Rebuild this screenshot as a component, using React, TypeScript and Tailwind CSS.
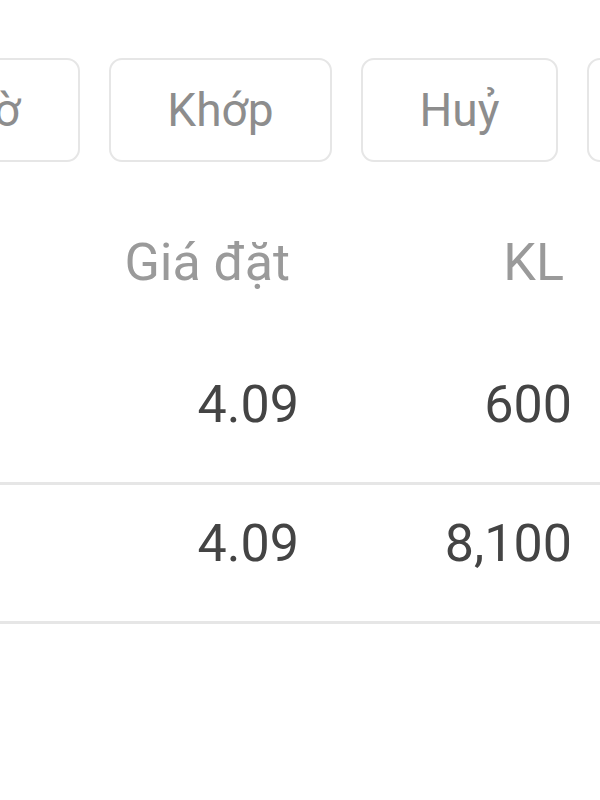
const tabs = [
  { label: "Chờ", w: "w-[201px]" },
  { label: "Khớp", w: "w-[223px]" },
  { label: "Huỷ", w: "w-[197px]" },
  { label: "Tất cả", w: "w-[230px]" },
];

const rows = [
  { price: "4.09", qty: "600" },
  { price: "4.09", qty: "8,100" },
];

export default function App() {
  return (
    <div className="w-[600px] h-[800px] bg-white overflow-hidden font-['Roboto',sans-serif]">
      {/* Status filter tabs */}
      <div className="flex gap-[29px] pt-[58px] ml-[-121px]">
        {tabs.map((t) => (
          <div
            key={t.label}
            className={`${t.w} h-[104px] shrink-0 flex items-center justify-center rounded-[13px] border-2 border-[#e6e6e6] text-[46px] text-[#8d8d8d] whitespace-nowrap`}
          >
            {t.label}
          </div>
        ))}
      </div>

      {/* Table header */}
      <div className="flex h-[184px] pt-[71px] pr-[28px] text-[52px] leading-[60px] text-[#9a9a9a]">
        <div className="flex-1" />
        <div className="w-[200px] text-right pr-[9px]">Giá đặt</div>
        <div className="w-[273px] text-right pr-[8px]">KL</div>
      </div>

      {/* Rows */}
      {rows.map((r, i) => (
        <div
          key={i}
          className="flex h-[139px] pt-[29px] pr-[28px] border-b-[3px] border-[#e6e6e6] text-[52px] leading-[60px] text-[#444444]"
        >
          <div className="flex-1" />
          <div className="w-[200px] text-right">{r.price}</div>
          <div className="w-[273px] text-right">{r.qty}</div>
        </div>
      ))}
    </div>
  );
}
